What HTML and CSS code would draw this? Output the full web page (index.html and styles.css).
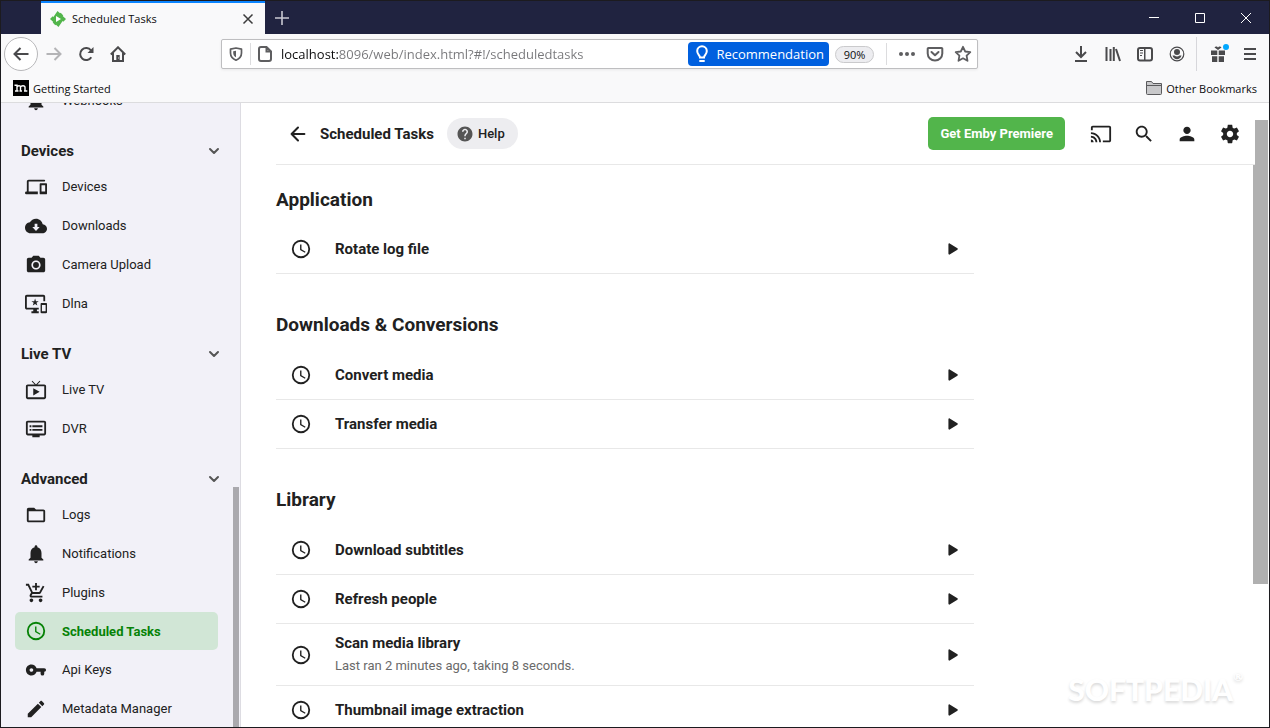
FILE: index.html
```html
<!DOCTYPE html>
<html lang="en">
<head>
<meta charset="utf-8">
<title>Scheduled Tasks</title>
<link rel="stylesheet" href="styles.css">
</head>
<body>
<svg class="sprite" aria-hidden="true">
  <symbol id="clock" viewBox="0 0 24 24"><circle cx="12" cy="12" r="9" fill="none" stroke="currentColor" stroke-width="2"/><path d="M12.5 7H11v6l5.25 3.15.75-1.23-4.5-2.67z"/></symbol>
  <symbol id="play" viewBox="0 0 24 24"><path d="M6.500 6.200c0-.8.9-1.200 1.500-.8l9.300 5.800c.6.400.6 1.200 0 1.600l-9.300 5.800c-.6.400-1.500 0-1.500-.8z"/></symbol>
  <symbol id="bell" viewBox="0 0 24 24"><path d="M12 22c1.100 0 2-.9 2-2h-4c0 1.100.89 2 2 2zm6-6v-5c0-3.070-1.640-5.640-4.500-6.320V4c0-.83-.67-1.500-1.500-1.500s-1.500.67-1.500 1.500v.68C7.630 5.360 6 7.920 6 11v5l-2 2v1h16v-1l-2-2z"/></symbol>
  <symbol id="chevron" viewBox="0 0 24 24"><path d="M6 9l6 6 6-6" fill="none" stroke="currentColor" stroke-width="3" stroke-linecap="round" stroke-linejoin="round"/></symbol>
</svg>

<div class="window">
  <header class="tabs">
    <div class="tab">
      <svg class="i16" viewBox="0 0 16 16"><path fill="#52b54b" d="M7.500 0l2.500 2.300.7-.6 2.600 2.700-.6.600L16 8l-2.700 2.800-.7-.7L8.500 16 6 13.700l-.7.600-2.600-2.700.6-.6L0 8l2.700-2.800.7.700z"/><path fill="#fff" d="M6 5v6l5-3z"/></svg>
      <span class="tab-title">Scheduled Tasks</span>
      <button class="tab-close" aria-label="Close tab"><svg class="i12" viewBox="0 0 12 12"><path d="M1.500 1.500l9 9M10.500 1.500l-9 9" stroke="#3c3c3c" stroke-width="1.500"/></svg></button>
    </div>
    <button class="tab-new" aria-label="New tab"><svg class="i16" viewBox="0 0 16 16"><path d="M8 1v14M1 8h14" stroke="#c9c9d2" stroke-width="1.600"/></svg></button>
    <div class="win-buttons">
      <button aria-label="Minimize"><svg class="i12" viewBox="0 0 12 12"><path d="M1 5.500h10" stroke="#fff"/></svg></button>
      <button aria-label="Maximize"><svg class="i12" viewBox="0 0 12 12"><path d="M1.500 1.500h9v9h-9z" fill="none" stroke="#fff"/></svg></button>
      <button aria-label="Close"><svg class="i12" viewBox="0 0 12 12"><path d="M1 1l10 10M11 1L1 11" stroke="#fff"/></svg></button>
    </div>
  </header>

  <div class="toolbar">
    <button class="tool back" aria-label="Back"><svg class="i16" viewBox="0 0 16 16"><path class="ln" d="M15.500 8H1.500M7.500 2L1.500 8l6 6"/></svg></button>
    <button class="tool faded" aria-label="Forward"><svg class="i16" viewBox="0 0 16 16"><path class="ln" d="M.5 8h14M8.500 2l6 6-6 6"/></svg></button>
    <button class="tool" aria-label="Reload"><svg class="i16" viewBox="0 0 16 16"><path class="ln" d="M13.300 11.200A6 6 0 1 1 13 4.500"/><path d="M15.500 1v6h-6z"/></svg></button>
    <button class="tool" aria-label="Home"><svg class="i16" viewBox="0 0 16 16"><path class="ln" d="M.8 8.500L8 1.300l7.200 7.200M3 7v8h10V7"/><path d="M6.300 9h3.400v6H6.300z"/><path d="M8.200 11.500h.8v1h-.8z" fill="#fff"/></svg></button>

    <div class="urlbar">
      <button class="shield" aria-label="Tracking protection"><svg class="i14" viewBox="0 0 14 14"><path d="M7 1l5.500 1.200V6c0 3.500-2 5.700-5.500 7.200C3.500 11.700 1.500 9.500 1.500 6V2.200z" fill="none" stroke="currentColor" stroke-width="1.700" stroke-linejoin="round"/><path d="M7 3.700v6.600C5 9.200 4.300 8 4.200 6V4.300z"/></svg></button>
      <svg class="i16 page" viewBox="0 0 16 16"><path class="ln" d="M9.500 1H4a2 2 0 0 0-2 2v10a2 2 0 0 0 2 2h8a2 2 0 0 0 2-2V5.500zM9.500 1v4.500H14"/></svg>
      <input class="address" type="text" aria-label="Address" value="localhost:8096/web/index.html?#!/scheduledtasks">
      <button class="recommend"><svg class="i18" viewBox="0 0 18 18"><path d="M7 12.500c0-2-2.800-3-2.800-6.500a4.800 4.800 0 0 1 9.600 0c0 3.500-2.800 4.500-2.800 6.500zM6.300 16h5.400" fill="none" stroke="#fff" stroke-width="2"/></svg>Recommendation</button>
      <button class="zoom">90%</button>
      <span class="url-sep"></span>
      <button class="act" aria-label="Page actions"><svg class="i18" viewBox="0 0 18 18"><circle cx="3" cy="9" r="2"/><circle cx="9" cy="9" r="2"/><circle cx="15" cy="9" r="2"/></svg></button>
      <button class="act" aria-label="Save to Pocket"><svg class="i18" viewBox="0 0 18 18"><path class="ln" d="M2.500 3h13a.8.8 0 0 1 .8.800V8.500a7.300 7 0 0 1-14.600 0V3.800A.8.800 0 0 1 2.500 3zM5.500 7L9 10.300 12.500 7" stroke-linecap="round" stroke-linejoin="round"/></svg></button>
      <button class="act" aria-label="Bookmark this page"><svg class="i18" viewBox="0 0 18 18"><path d="M9 1.800l2.200 4.700 5.100.7-3.700 3.500.9 5.100L9 13.300l-4.500 2.500.9-5.100L1.700 7.200l5.100-.7z" fill="none" stroke="currentColor" stroke-width="1.800" stroke-linejoin="round"/></svg></button>
    </div>

    <button class="tool" aria-label="Downloads"><svg class="i16" viewBox="0 0 16 16"><path class="ln" d="M8 0v11M3 6l5 5 5-5M2 15h12"/></svg></button>
    <button class="tool" aria-label="Library"><svg class="i16" viewBox="0 0 16 16"><path class="ln" d="M1.500 1v14M5.500 3v12M8.800 1v14M11 3l4 12"/></svg></button>
    <button class="tool" aria-label="Sidebars"><svg class="i16" viewBox="0 0 16 16"><rect class="ln" x="1" y="2" width="14" height="12.500" rx="2"/><path d="M7 2h1.500v12.500H7zM3 4h3v1H3zM3 6.500h3v1H3zM3 9h2v1H3z"/></svg></button>
    <button class="tool" aria-label="Account"><svg class="i16" viewBox="0 0 16 16"><circle cx="8" cy="8" r="6.800" fill="none" stroke="currentColor" stroke-width="1.200"/><circle cx="8" cy="6" r="3"/><path d="M3.500 9.500h2c1.500 1.200 3.500 1.200 5 0h2c-.8 2.500-2.500 3.800-4.500 3.800s-3.700-1.300-4.500-3.800z"/></svg></button>
    <span class="tool-sep"></span>
    <button class="tool gift" aria-label="What's new"><svg class="i16" viewBox="0 0 16 16"><path d="M1 4.500h6.300V9H1zM8.700 4.500H15V9H8.700zM2 10.300h5.300V16H2zM8.700 10.300H14V16H8.700zM8 4L4.500 1.500C5.500-.3 7.500.5 8 1.500c.5-1 2.500-1.800 3.500 0z"/></svg><span class="dot"></span></button>
    <button class="tool" aria-label="Menu"><svg class="i16" viewBox="0 0 16 16"><path class="ln" d="M2 3h12M2 8h12M2 13h12"/></svg></button>
  </div>

  <div class="bookmarks">
    <a href="#"><svg class="i16" viewBox="0 0 16 16"><path d="M0 0h16v16H0z" fill="#000"/><path d="M1.500 5.200h2.500v6M2 11h3.500M4 7c.5-1.500 3.500-2 3.500.3V11M6.500 11h2.500M7.500 7c.7-1.500 4.500-2 4.500.3V11M11 11h3.300" fill="none" stroke="#fff" stroke-width="1.400"/></svg>Getting Started</a>
    <a href="#"><svg class="i16" viewBox="0 0 16 16"><path d="M.5 13.500v-12h5l1.500 2h8.500v10a1 1 0 0 1-1 1h-13a1 1 0 0 1-1-1z" fill="#c8c8ca" stroke="#5a5a5c"/><path d="M1 5.500h14" stroke="#5a5a5c"/></svg>Other Bookmarks</a>
  </div>

  <div class="app">
    <nav class="sidebar">
      <div class="side-scroll">
        <a class="item" href="#"><svg class="i22"><use href="#bell"/></svg>Webhooks</a>

        <h2 class="group">Devices<svg class="i16"><use href="#chevron"/></svg></h2>
        <a class="item" href="#"><svg class="i22" viewBox="0 0 24 24"><path d="M4 6h17a1 1 0 0 0 0-2H4c-1.100 0-2 .9-2 2v11h-.5a1.500 1.500 0 0 0 0 3H14v-3H4V6zm19 2h-6c-.55 0-1 .45-1 1v10c0 .55.45 1 1 1h6c.55 0 1-.45 1-1V9c0-.55-.45-1-1-1zm-1 9h-4v-7h4v7z"/></svg>Devices</a>
        <a class="item" href="#"><svg class="i22" viewBox="0 0 24 24"><path fill-rule="evenodd" d="M19.350 10.040C18.670 6.590 15.640 4 12 4 9.110 4 6.600 5.640 5.350 8.040 2.340 8.360 0 10.910 0 14c0 3.310 2.690 6 6 6h13c2.760 0 5-2.240 5-5 0-2.640-2.050-4.780-4.650-4.960zM16 13l-4 4.500L8 13h2.500V9.500h3V13z"/></svg>Downloads</a>
        <a class="item" href="#"><svg class="i22" viewBox="0 0 24 24"><circle cx="12" cy="12" r="3.200"/><path d="M9 2L7.170 4H4c-1.100 0-2 .9-2 2v12c0 1.100.9 2 2 2h16c1.100 0 2-.9 2-2V6c0-1.100-.9-2-2-2h-3.170L15 2H9zm3 15c-2.760 0-5-2.240-5-5s2.240-5 5-5 5 2.240 5 5-2.240 5-5 5z"/></svg>Camera Upload</a>
        <a class="item" href="#"><svg class="i22" viewBox="0 0 24 24"><path d="M23 11.010L18 11c-.55 0-1 .45-1 1v9c0 .55.45 1 1 1h5c.55 0 1-.45 1-1v-9c0-.55-.45-.99-1-.99zM22.500 20h-4v-7h4v7zM20 2H2C.89 2 0 2.890 0 4v12c0 1.100.89 2 2 2h7v2H7v2h8v-2h-2v-2h2v-2H2V4h18v5h2V4c0-1.110-.9-2-2-2zm-8.030 7L11 6l-.97 3H7l2.470 1.760-.94 2.910 2.470-1.800 2.470 1.800-.94-2.910L15 9h-3.030z"/></svg>Dlna</a>

        <h2 class="group">Live TV<svg class="i16"><use href="#chevron"/></svg></h2>
        <a class="item" href="#"><svg class="i22" viewBox="0 0 24 24"><path d="M21 6h-7.590l3.290-3.290L16 2l-4 4-4-4-.7.710L10.590 6H3c-1.100 0-2 .89-2 2v12c0 1.100.9 2 2 2h18c1.100 0 2-.9 2-2V8c0-1.110-.9-2-2-2zm0 14H3V8h18v12zM9 10v8l7-4z"/></svg>Live TV</a>
        <a class="item" href="#"><svg class="i22" viewBox="0 0 24 24"><path d="M21 3H3c-1.100 0-2 .9-2 2v12c0 1.100.9 2 2 2h5v2h8v-2h5c1.100 0 1.990-.9 1.990-2L23 5c0-1.100-.9-2-2-2zm0 14H3V5h18v12zm-2-9H8v2h11V8zm0 4H8v2h11v-2zM7 8H5v2h2V8zm0 4H5v2h2v-2z"/></svg>DVR</a>

        <h2 class="group">Advanced<svg class="i16"><use href="#chevron"/></svg></h2>
        <a class="item" href="#"><svg class="i22" viewBox="0 0 24 24"><path d="M20 6h-8l-2-2H4c-1.100 0-1.990.9-1.990 2L2 18c0 1.100.9 2 2 2h16c1.100 0 2-.9 2-2V8c0-1.100-.9-2-2-2zm0 12H4V8h16v10z"/></svg>Logs</a>
        <a class="item" href="#"><svg class="i22"><use href="#bell"/></svg>Notifications</a>
        <a class="item" href="#"><svg class="i22" viewBox="0 0 24 24"><path d="M11 9h2V6h3V4h-3V1h-2v3H8v2h3v3zm-4 9c-1.100 0-1.990.9-1.990 2S5.900 22 7 22s2-.9 2-2-.9-2-2-2zm10 0c-1.100 0-1.990.9-1.990 2s.89 2 1.990 2 2-.9 2-2-.9-2-2-2zm-9.830-3.250l.03-.12.9-1.630h7.450c.75 0 1.410-.41 1.750-1.030l3.860-7.010L19.420 4h-.01l-1.100 2-2.760 5H8.530l-.13-.27L6.160 6l-.95-2-.94-2H1v2h2l3.600 7.590-1.350 2.450c-.16.280-.25.610-.25.960 0 1.100.9 2 2 2h12v-2H7.420c-.13 0-.25-.11-.25-.25z"/></svg>Plugins</a>
        <a class="item active" href="#" aria-current="page"><svg class="i22"><use href="#clock"/></svg>Scheduled Tasks</a>
        <a class="item" href="#"><svg class="i22" viewBox="0 0 24 24"><path d="M12.650 10C11.830 7.670 9.610 6 7 6c-3.310 0-6 2.690-6 6s2.690 6 6 6c2.610 0 4.830-1.670 5.650-4H17v2a2 2 0 0 0 4 0v-2a2 2 0 0 0 0-4H12.650zM7 14c-1.100 0-2-.9-2-2s.9-2 2-2 2 .9 2 2-.9 2-2 2z"/></svg>Api Keys</a>
        <a class="item" href="#"><svg class="i22" viewBox="0 0 24 24"><path d="M3 17.250V21h3.750L17.810 9.940l-3.750-3.750L3 17.250zM20.710 7.040c.39-.39.39-1.020 0-1.410l-2.340-2.340c-.39-.39-1.020-.39-1.410 0l-1.830 1.830 3.750 3.750 1.830-1.830z"/></svg>Metadata Manager</a>
      </div>
      <span class="side-thumb"></span>
    </nav>

    <main class="main">
      <span class="main-thumb"></span>
      <div class="topbar">
        <button class="icon-btn go-back" aria-label="Back"><svg class="i22" viewBox="0 0 24 24"><path d="M19 12H5M12 5l-7 7 7 7" fill="none" stroke="currentColor" stroke-width="2.200" stroke-linecap="round" stroke-linejoin="round"/></svg></button>
        <h1 class="title">Scheduled Tasks</h1>
        <button class="help"><svg class="i18" viewBox="0 0 24 24"><path fill="#555" d="M12 2C6.480 2 2 6.480 2 12s4.480 10 10 10 10-4.480 10-10S17.520 2 12 2zm1 17h-2v-2h2v2zm2.070-7.750l-.9.920C13.450 12.900 13 13.500 13 15h-2v-.5c0-1.100.45-2.100 1.170-2.830l1.240-1.260c.37-.36.590-.86.590-1.410 0-1.100-.9-2-2-2s-2 .9-2 2H8c0-2.210 1.790-4 4-4s4 1.790 4 4c0 .88-.36 1.680-.93 2.250z"/></svg>Help</button>
        <button class="premiere">Get Emby Premiere</button>
        <button class="icon-btn" aria-label="Cast"><svg class="i22" viewBox="0 0 24 24"><path d="M21 3H3c-1.100 0-2 .9-2 2v3h2V5h18v14h-7v2h7c1.100 0 2-.9 2-2V5c0-1.100-.9-2-2-2zM1 18v3h3c0-1.660-1.340-3-3-3zm0-4v2c2.760 0 5 2.240 5 5h2c0-3.870-3.130-7-7-7zm0-4v2c4.970 0 9 4.030 9 9h2c0-6.080-4.930-11-11-11z"/></svg></button>
        <button class="icon-btn" aria-label="Search"><svg class="i22" viewBox="0 0 24 24"><path d="M15.500 14h-.79l-.28-.27C15.410 12.590 16 11.110 16 9.500 16 5.910 13.090 3 9.500 3S3 5.910 3 9.500 5.910 16 9.500 16c1.610 0 3.090-.59 4.230-1.570l.27.280v.79l5 4.990L20.490 19l-4.990-5zm-6 0C7.010 14 5 11.990 5 9.500S7.010 5 9.500 5 14 7.010 14 9.500 11.990 14 9.500 14z"/></svg></button>
        <button class="icon-btn" aria-label="User"><svg class="i22" viewBox="0 0 24 24"><path d="M12 12c2.210 0 4-1.790 4-4s-1.790-4-4-4-4 1.790-4 4 1.790 4 4 4zm0 2c-2.670 0-8 1.340-8 4v2h16v-2c0-2.660-5.330-4-8-4z"/></svg></button>
        <button class="icon-btn" aria-label="Settings"><svg class="i22" viewBox="0 0 24 24"><path d="M19.430 12.980c.04-.32.070-.64.070-.98s-.03-.66-.07-.98l2.110-1.650c.19-.15.240-.42.120-.64l-2-3.460c-.12-.22-.39-.3-.61-.22l-2.490 1c-.52-.4-1.080-.73-1.690-.98l-.38-2.650C14.460 2.180 14.250 2 14 2h-4c-.25 0-.46.180-.49.420l-.38 2.650c-.61.250-1.170.590-1.690.98l-2.490-1c-.23-.09-.49 0-.61.220l-2 3.460c-.13.220-.07.490.12.640l2.110 1.650c-.04.320-.07.650-.07.980s.03.660.07.980l-2.110 1.650c-.19.150-.24.420-.12.640l2 3.460c.12.220.39.300.61.220l2.490-1c.52.400 1.080.730 1.690.98l.38 2.650c.03.240.240.420.490.420h4c.25 0 .46-.18.490-.42l.38-2.650c.61-.25 1.170-.59 1.690-.98l2.490 1c.23.090.49 0 .61-.22l2-3.460c.12-.22.070-.49-.12-.64l-2.110-1.650zM12 15.500c-1.930 0-3.500-1.570-3.500-3.500s1.570-3.500 3.500-3.500 3.500 1.570 3.500 3.500-1.570 3.500-3.500 3.500z"/></svg></button>
      </div>

      <div class="content">
        <section>
          <h2 class="section-title">Application</h2>
          <div class="row"><svg class="i22"><use href="#clock"/></svg><div class="label">Rotate log file</div><button class="run" aria-label="Run Rotate log file"><svg class="i20"><use href="#play"/></svg></button></div>
        </section>
        <section>
          <h2 class="section-title">Downloads &amp; Conversions</h2>
          <div class="row"><svg class="i22"><use href="#clock"/></svg><div class="label">Convert media</div><button class="run" aria-label="Run Convert media"><svg class="i20"><use href="#play"/></svg></button></div>
          <div class="row"><svg class="i22"><use href="#clock"/></svg><div class="label">Transfer media</div><button class="run" aria-label="Run Transfer media"><svg class="i20"><use href="#play"/></svg></button></div>
        </section>
        <section>
          <h2 class="section-title">Library</h2>
          <div class="row"><svg class="i22"><use href="#clock"/></svg><div class="label">Download subtitles</div><button class="run" aria-label="Run Download subtitles"><svg class="i20"><use href="#play"/></svg></button></div>
          <div class="row"><svg class="i22"><use href="#clock"/></svg><div class="label">Refresh people</div><button class="run" aria-label="Run Refresh people"><svg class="i20"><use href="#play"/></svg></button></div>
          <div class="row"><svg class="i22"><use href="#clock"/></svg><div class="label">Scan media library<p class="note">Last ran 2 minutes ago, taking 8 seconds.</p></div><button class="run" aria-label="Run Scan media library"><svg class="i20"><use href="#play"/></svg></button></div>
          <div class="row"><svg class="i22"><use href="#clock"/></svg><div class="label">Thumbnail image extraction</div><button class="run" aria-label="Run Thumbnail image extraction"><svg class="i20"><use href="#play"/></svg></button></div>
        </section>
      </div>
      <div class="watermark">SOFTPEDIA<span>®</span></div>
    </main>
  </div>
</div>
</body>
</html>
```
FILE: styles.css
```css
* { box-sizing: border-box; }
body { margin: 0; font-family: "Open Sans", "Noto Sans", sans-serif; color: #0c0c0d; }
button { border: 0; background: none; padding: 0; font: inherit; color: inherit; display: flex; align-items: center; justify-content: center; cursor: pointer; }
a { color: inherit; text-decoration: none; }
h1, h2, p { margin: 0; }
svg { flex: none; fill: currentColor; display: block; }
.sprite { position: absolute; width: 0; height: 0; }
.i12 { width: 12px; height: 12px; }
.i14 { width: 14px; height: 14px; }
.i16 { width: 16px; height: 16px; }
.i18 { width: 18px; height: 18px; }
.i20 { width: 20px; height: 20px; }
.i22 { width: 22px; height: 22px; }
.ln { fill: none; stroke: currentColor; stroke-width: 2; }

.window { height: 100vh; display: flex; flex-direction: column; border: 1px solid #1c1b1f; overflow: hidden; background: #f9f9fa; }

/* Tab strip */
.tabs { display: flex; flex: none; height: 33px; background: #202340; padding-left: 40px; }
.tab { display: flex; align-items: center; width: 224px; padding: 0 10px 0 9px; gap: 6px; background: #f9f9fa; border-top: 2px solid #0a84ff; font-size: 11px; }
.tab-title { flex: 1; white-space: nowrap; }
.tab-close { width: 14px; height: 20px; }
.tab-new { width: 34px; }
.win-buttons { display: flex; margin-left: auto; }
.win-buttons button { width: 46px; }

/* Navigation toolbar */
.toolbar { display: flex; flex: none; align-items: center; height: 40px; padding: 0 3px; color: #4a4a4c; }
.tool { width: 32px; height: 32px; flex: none; }
.back { width: 34px; height: 34px; border: 1px solid #b8b8ba; border-radius: 50%; background: #fff; }
.faded { color: #b4b4b6; }
.tool-sep { width: 1px; height: 34px; background: #d7d7db; margin: 0 5px 0 3px; }
.gift { position: relative; }
.dot { position: absolute; top: 6px; right: 5px; width: 6px; height: 6px; border-radius: 50%; background: #00a8ff; }
.urlbar { flex: 1; min-width: 0; display: flex; align-items: center; height: 30px; margin: 0 87px; background: #fff; border: 1px solid #bebec0; border-radius: 2px; color: #5e5e60; box-shadow: 0 1px 3px #00000012; }
.shield { width: 29px; height: 22px; border-right: 1px solid #dcdcde; }
.page { margin: 0 8px 0 6px; }
.address { flex: 1; min-width: 0; border: 0; padding: 0; outline: 0; height: 26px; font: 13px "Open Sans", "Noto Sans", sans-serif; color: transparent; background: linear-gradient(to right, #0c0c0d 57px, #77777a 57px); -webkit-background-clip: text; background-clip: text; }
.recommend { height: 24px; padding: 0 5px; gap: 5px; border-radius: 4px; background: #0060df; color: #fff; font-size: 13px; white-space: nowrap; }
.zoom { width: 39px; height: 17px; margin-left: 6px; border: 1px solid #cacacc; border-radius: 9px; background: #ededf0; color: #0c0c0d; font-size: 11px; }
.url-sep { width: 1px; height: 22px; margin: 0 6px 0 12px; background: #dcdcde; }
.act { width: 28px; height: 28px; }

/* Bookmarks bar */
.bookmarks { display: flex; flex: none; justify-content: space-between; align-items: center; height: 29px; padding: 0 12px; border-bottom: 1px solid #dcdcde; font-size: 11px; }
.bookmarks a { display: flex; align-items: center; gap: 4px; }

/* Application */
.app { flex: 1; min-height: 0; display: flex; font-family: Roboto, sans-serif; color: #212121; background: #fff; }
.sidebar { position: relative; width: 240px; flex: none; overflow: hidden; background: #f2f1f8; border-right: 1px solid #dddce2; }
.side-scroll { margin-top: -22px; padding: 0 22px 0 14px; }
.item { display: flex; align-items: center; height: 39px; padding-left: 10px; gap: 15px; font-size: 13px; }
.item.active { height: 38px; border-radius: 5px; background: #d1e6d6; color: #068206; font-weight: 700; }
.group { display: flex; align-items: center; justify-content: space-between; height: 47px; padding: 14px 0 0 6px; font-size: 15px; font-weight: 700; }
.group svg { color: #555; margin-right: -4px; }
.side-thumb { position: absolute; right: 1px; bottom: 0; width: 6px; height: 38.4%; background: #aaa9ae; }

.main { position: relative; flex: 1; min-width: 0; overflow: hidden; background: #fff; }
.main-thumb { position: absolute; top: 17px; right: 1px; width: 15px; height: 74.3%; background: #b0b0b0; }
.topbar { position: relative; display: flex; align-items: center; height: 62px; margin: 0 14px 0 35px; padding: 0 4px 0 11px; background: #fff; border-bottom: 1px solid #e8e8e8; }
.icon-btn { width: 43px; height: 40px; flex: none; }
.go-back { width: 22px; }
.title { margin: 0 13px 0 11px; font-size: 15px; font-weight: 700; }
.help { height: 31px; padding: 0 13px 0 9px; gap: 4px; border-radius: 16px; background: #ededf0; font-size: 13px; font-weight: 500; }
.premiere { height: 33px; margin: 0 14px 0 auto; padding: 0 12px; border-radius: 5px; background: #52b54b; color: #fff; font-size: 13px; font-weight: 700; }

.content { max-width: 733px; padding-left: 35px; }
.section-title { padding: 39px 0 14px; font-size: 19px; line-height: 24px; font-weight: 700; }
section:first-child .section-title { padding: 23px 0 13px; }
.row { display: flex; align-items: center; min-height: 49px; padding: 0 11px 0 14px; border-bottom: 1px solid #e8e8e8; }
.label { flex: 1; margin-left: 23px; padding: 8px 0; font-size: 15px; line-height: 23px; font-weight: 700; }
.note { font-size: 13px; line-height: 22px; font-weight: 400; color: #6a6a6a; }
.run { width: 20px; height: 32px; }

.watermark { position: absolute; right: 26px; bottom: 18px; display: flex; align-items: flex-start; font: 900 30px/40px Lato, sans-serif; color: #fff; text-shadow: 0 2px 3px #00000026; }
.watermark span { font-size: 12px; line-height: 16px; }
```
